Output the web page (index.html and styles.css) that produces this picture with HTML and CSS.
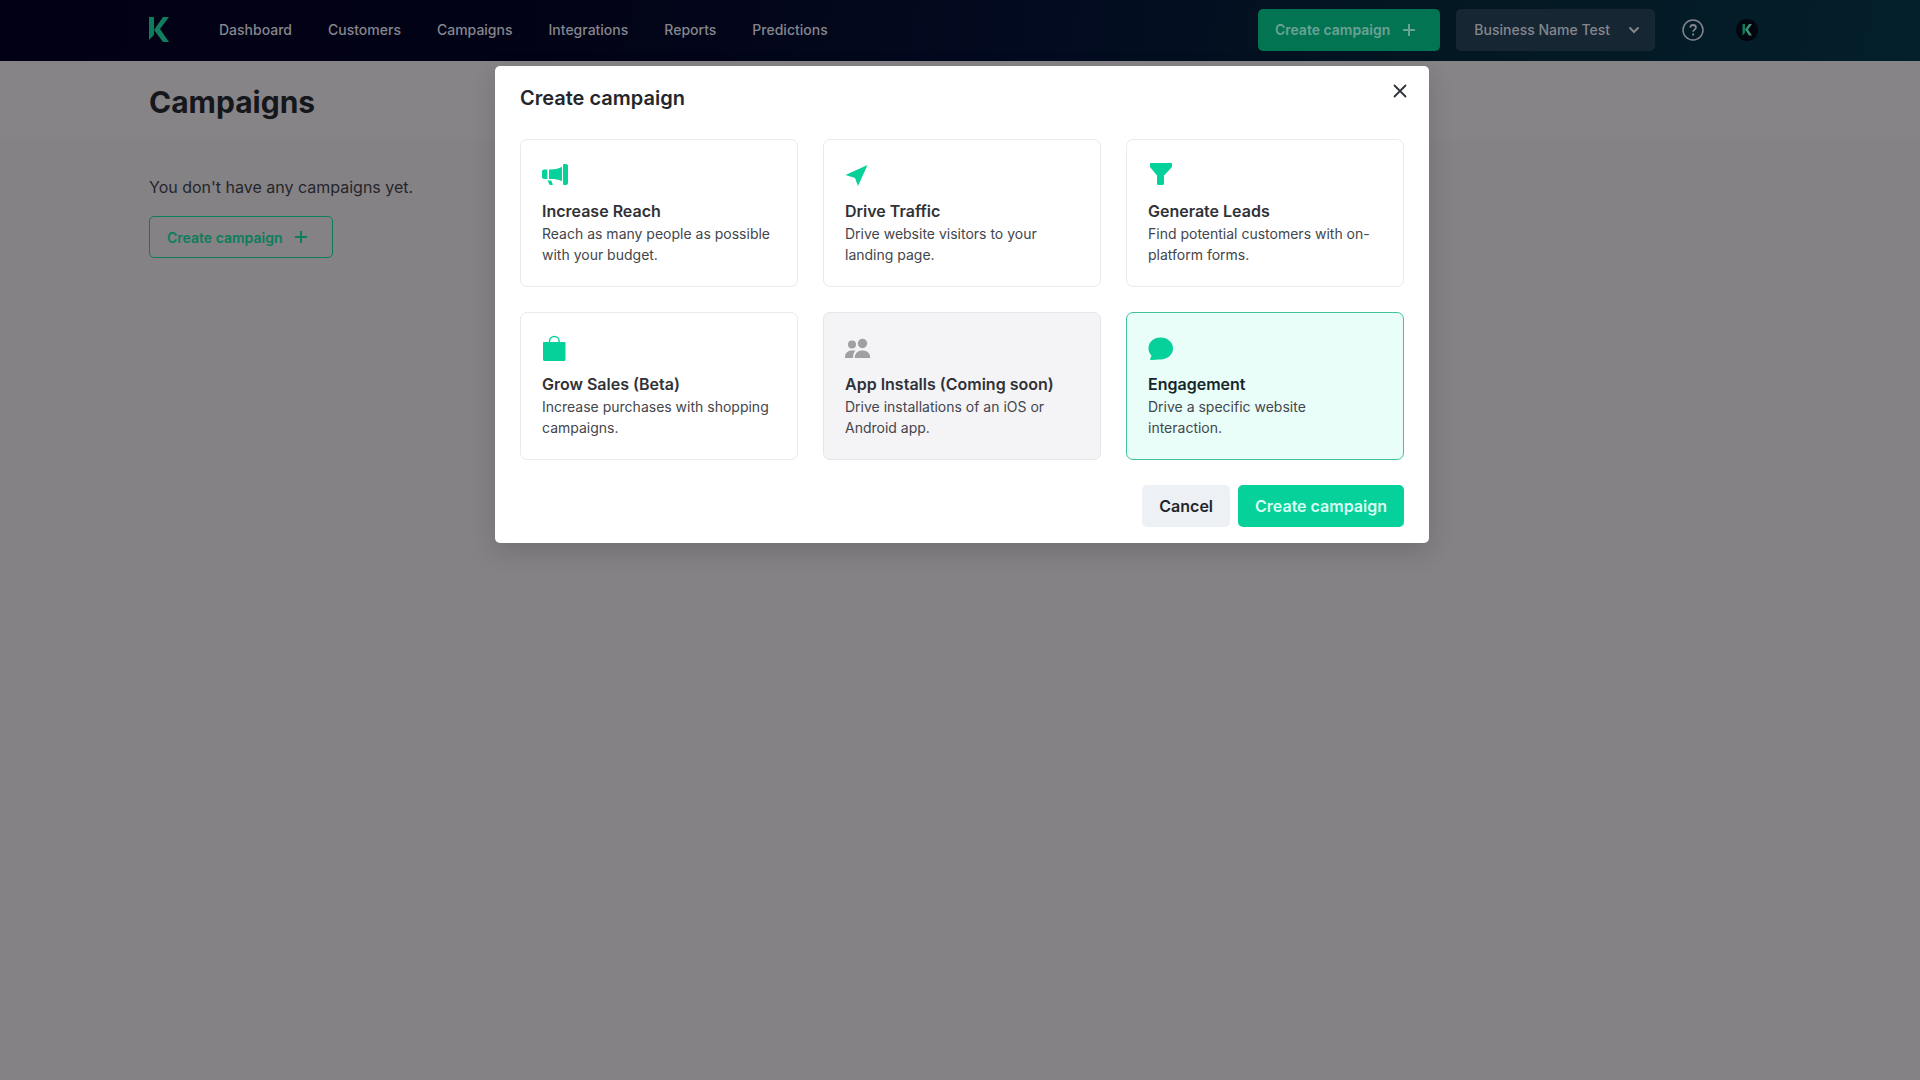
FILE: index.html
```
<!DOCTYPE html>
<html lang="en">
<head>
<meta charset="utf-8">
<meta name="viewport" content="width=device-width, initial-scale=1">
<title>Campaigns</title>
<link rel="stylesheet" href="styles.css">
</head>
<body>
<header class="topbar">
  <div class="container topbar-inner">
    <a class="logo" href="#" aria-label="Home">
      <svg width="20" height="26" viewBox="0 0 20 26"><path d="M0 0h5v18L0 23z" fill="#0b7d5b"/><path d="M14 0h6l-9 12 9 13h-6L5 13z" fill="#127c5f"/></svg>
    </a>
    <nav class="nav">
      <a href="#">Dashboard</a>
      <a href="#">Customers</a>
      <a href="#">Campaigns</a>
      <a href="#">Integrations</a>
      <a href="#">Reports</a>
      <a href="#">Predictions</a>
    </nav>
    <div class="actions">
      <button class="btn btn-top" type="button">Create campaign
        <svg class="plus" width="14" height="14" viewBox="0 0 14 14"><path d="M7 1v12M1 7h12"/></svg>
      </button>
      <button class="btn btn-account" type="button">Business Name Test
        <svg width="12" height="8" viewBox="0 0 12 8"><path d="M2 2l4 4 4-4" fill="none" stroke="currentColor" stroke-width="2" stroke-linecap="round"/></svg>
      </button>
      <a class="help" href="#" aria-label="Help">
        <svg width="22" height="22" viewBox="0 0 22 22" fill="none" stroke="currentColor" stroke-width="1.800"><circle cx="11" cy="11" r="10" stroke-width="1.500"/><path d="M8.200 8.600c.2-1.700 1.300-2.600 2.900-2.600 1.700 0 2.800 1 2.800 2.400 0 2.200-2.800 2.200-2.800 4.400"/><path d="M11.100 14.600v2"/></svg>
      </a>
      <a class="avatar" href="#" aria-label="Profile">
        <svg width="22" height="22" viewBox="0 0 22 22"><circle cx="11" cy="11" r="11" fill="#03050f"/><path d="M6.500 5H9v9l-2.500 2.500z" fill="#0b7d5b"/><path d="M13 5h3l-4 5.500 4 6h-3l-4-6z" fill="#3f9079"/></svg>
      </a>
    </div>
  </div>
</header>

<main>
  <div class="page-head"><div class="container"><h1>Campaigns</h1></div></div>
  <div class="container empty">
    <p>You don't have any campaigns yet.</p>
    <button class="btn btn-outline" type="button">Create campaign
      <svg class="plus" width="14" height="14" viewBox="0 0 14 14"><path d="M7 1v12M1 7h12"/></svg>
    </button>
  </div>
</main>

<div class="overlay">
  <section class="modal" role="dialog" aria-modal="true" aria-labelledby="modal-title">
    <div class="modal-head">
      <h2 id="modal-title">Create campaign</h2>
      <button class="close" type="button" aria-label="Close">
        <svg width="14" height="14" viewBox="0 0 14 14"><path d="M1.500 1.500l11 11M12.500 1.500l-11 11" stroke="currentColor" stroke-width="1.800" stroke-linecap="round"/></svg>
      </button>
    </div>
    <div class="cards">
      <button class="card" type="button">
        <svg class="icon" viewBox="0 0 26 26"><path d="M2 7.500h3.400v9.500H2C.7 17 0 16 0 14.800V9.700C0 8.500.7 7.500 2 7.500zM7 7.500h2c4 0 8-1 11-2.700v14.400C17 17.500 13 17 9 17H7zM22.300 2H24c1.200 0 2 .8 2 2v17c0 1.200-.8 2-2 2h-1.700c-.8 0-1.300-.5-1.300-1.300V3.300c0-.8.5-1.300 1.300-1.300zM5.500 18.500h3.700l1.500 3.500c.2.600-.2 1-.8 1H8.500c-.6 0-1-.3-1.200-.8z"/></svg>
        <span class="title">Increase Reach</span>
        <span class="text">Reach as many people as possible with your budget.</span>
      </button>
      <button class="card" type="button">
        <svg class="icon" viewBox="0 0 26 26"><path d="M22.500 3L0.500 13l9.500 3 3 8z"/></svg>
        <span class="title">Drive Traffic</span>
        <span class="text">Drive website visitors to your landing page.</span>
      </button>
      <button class="card" type="button">
        <svg class="icon" viewBox="0 0 26 26"><path d="M3 1h20c.6 0 1 .4 1 1v3l-8 8.500V22l-1 1h-5l-1-1v-8.500L2 5V2c0-.6.4-1 1-1z"/></svg>
        <span class="title">Generate Leads</span>
        <span class="text">Find potential customers with on-platform forms.</span>
      </button>
      <button class="card" type="button">
        <svg class="icon" viewBox="0 0 26 26"><path d="M2 7h20.500c.6 0 1 .4 1 1v16.500c0 .9-.6 1.500-1.500 1.500H2.500c-.9 0-1.500-.6-1.500-1.500V8c0-.6.4-1 1-1z"/><path d="M7.500 7.500V6a4.800 4.500 0 0 1 9.600 0v1.500" fill="none" stroke="#06d19a" stroke-width="1.400"/></svg>
        <span class="title">Grow Sales (Beta)</span>
        <span class="text">Increase purchases with shopping campaigns.</span>
      </button>
      <button class="card is-disabled" type="button" disabled>
        <svg class="icon" viewBox="0 0 26 26"><circle cx="7" cy="9.500" r="4"/><circle cx="17.500" cy="8.500" r="4.700"/><path d="M0 23v-1c0-3.500 2.700-6.500 6-6.500h4.500c-1.700 1.700-2.400 4-2.400 7.500zM9.800 23v-.6c0-4 3.100-7 7-7h1.400c3.900 0 7 3 7 7v.6z"/></svg>
        <span class="title">App Installs (Coming soon)</span>
        <span class="text">Drive installations of an iOS or Android app.</span>
      </button>
      <button class="card is-selected" type="button" aria-pressed="true">
        <svg class="icon" viewBox="0 0 26 26"><path d="M12.500 2.500C19.500 2.500 25 7.200 25 13.500S19.500 24 12.500 24.500c-3 0-7 .5-10.500.5l1.500-4.500C1.500 18.700.5 16.300.5 13.500.5 7.200 5.500 2.500 12.500 2.500z"/></svg>
        <span class="title">Engagement</span>
        <span class="text">Drive a specific website interaction.</span>
      </button>
    </div>
    <div class="modal-foot">
      <button class="btn btn-cancel" type="button">Cancel</button>
      <button class="btn btn-primary" type="button">Create campaign</button>
    </div>
  </section>
</div>
</body>
</html>
```
FILE: styles.css
```
* { box-sizing: border-box; }
body {
  margin: 0;
  min-height: 100vh;
  background: #848285;
  color: #24262b;
  font-family: Inter, "Liberation Sans", sans-serif;
  font-size: 14px;
}
a { color: inherit; text-decoration: none; }
svg { display: block; flex: none; }
h1, h2, p { margin: 0; }
button { font-family: inherit; cursor: pointer; }
.container { width: 100%; max-width: 1670px; margin: 0 auto; padding: 0 24px; }

.topbar { background: linear-gradient(100deg, #020014 0%, #020317 30%, #030b20 55%, #031722 75%, #04202b 100%); color: #85868d; }
.topbar-inner { display: flex; align-items: center; height: 61px; padding-bottom: 2px; }
.logo { display: block; margin-right: 50px; }
.nav { display: flex; gap: 36px; font-weight: 500; line-height: 20px; }
.actions { display: flex; align-items: center; margin-left: auto; }

.btn {
  display: inline-flex;
  align-items: center;
  justify-content: center;
  height: 42px;
  border: 1px solid transparent;
  border-radius: 5px;
  padding: 0 16px;
  font-size: 14px;
  font-weight: 600;
  white-space: nowrap;
}
.plus { fill: none; stroke: currentColor; stroke-width: 2; margin: 0 7px 0 12px; }
.btn-top { background: #037452; color: #6aa295; margin-right: 16px; }
.btn-account { background: #172633; color: #85868d; font-weight: 500; gap: 18px; margin-right: 27px; padding: 0 14px 0 17px; }
.help { margin-right: 32px; }
.avatar { margin-right: 13px; }
.btn-outline { border-color: #0b7d5b; background: transparent; color: #0b7d5b; padding: 0 17px; }

.page-head { padding: 20px 0 16px; background: #868487; }
h1 { font-size: 30px; font-weight: 700; line-height: 42px; color: #16171b; }
.empty { padding-top: 36px; }
.empty p { font-size: 16px; line-height: 24px; margin-bottom: 17px; }

.overlay { position: absolute; top: 66px; left: 0; right: 0; padding: 0 12px 0 16px; }
.modal {
  width: 100%;
  max-width: 934px;
  margin: 0 auto;
  padding: 16px 25px;
  border-radius: 5px;
  background: #fff;
  box-shadow: 0 8px 24px rgba(0, 0, 0, .15);
}
.modal-head { display: flex; justify-content: space-between; align-items: flex-start; margin-bottom: 25px; }
h2 { font-size: 20px; font-weight: 600; line-height: 32px; }
.close { border: 0; background: none; padding: 2px; margin-right: -5px; color: #30333a; }
.cards { display: grid; grid-template-columns: repeat(3, 1fr); gap: 25px; }
.card {
  display: flex;
  flex-direction: column;
  align-items: flex-start;
  min-height: 148px;
  padding: 22px 21px 20px;
  border: 1px solid #e9e9ef;
  border-radius: 7px;
  background: #fff;
  color: #303237;
  text-align: left;
}
.icon { width: 26px; height: 26px; fill: #06d19a; margin-bottom: 11px; }
.title { font-size: 16px; font-weight: 600; line-height: 24px; }
.text { font-size: 14px; line-height: 21px; color: #43464c; }
.is-disabled { background: #f4f4f7; border-color: #e6e6ea; cursor: default; }
.is-disabled .icon { fill: #a0a0a3; }
.is-selected { background: #e9fdf9; border-color: #3fc39d; }
.is-selected .title { color: #16262b; }
.modal-foot { display: flex; justify-content: flex-end; gap: 8px; margin-top: 25px; }
.btn-cancel { background: #edf0f5; color: #24262b; font-size: 16px; }
.btn-primary { background: #06d19a; color: #d8fff3; font-size: 16px; }
```
